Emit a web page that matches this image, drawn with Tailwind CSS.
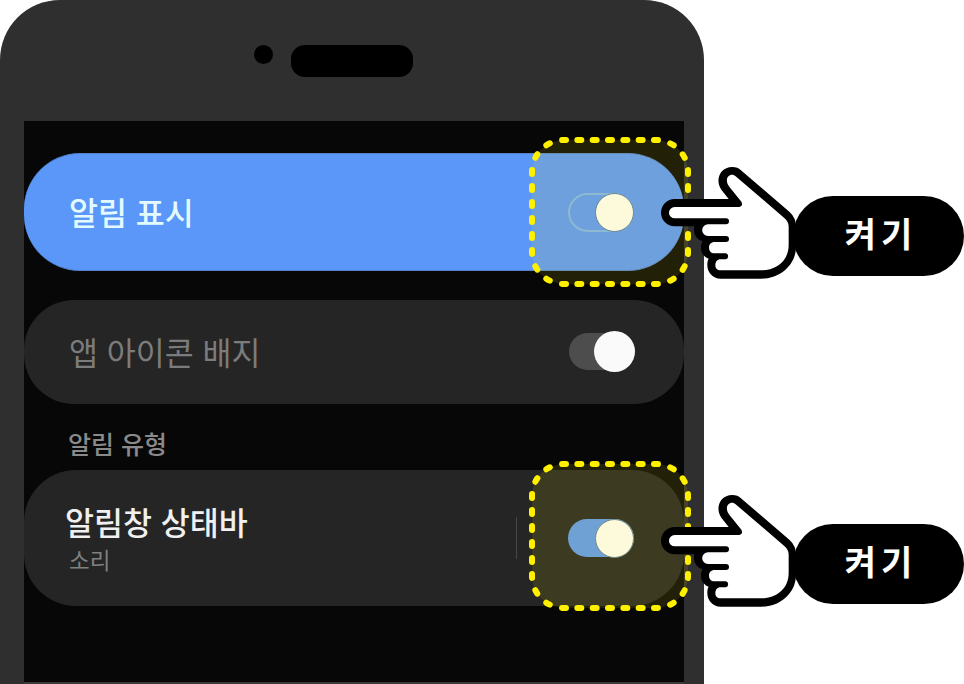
<!DOCTYPE html>
<html lang="ko">
<head>
<meta charset="utf-8">
<title>알림 설정</title>
<script src="https://cdn.jsdelivr.net/npm/@tailwindcss/browser@4"></script>
</head>
<body class="bg-white font-['Noto_Sans_CJK_KR','Noto_Sans',sans-serif]">
<svg class="hidden">
  <symbol id="hand" viewBox="30 30 414 348">
    <path fill="#000" d="M74 132H236L214 104C195 78 208 36 247 36C258 36 266 40 272 45L418 170Q438 188 438 215V275C438 330 390 371 335 371H212C188 371 172 352 172 330C172 322 173 316 176 311C160 305 153 292 153 278C153 270 155 264 158 259C142 254 132 240 132 225C132 221 132 217 133 214H74A41 41 0 0 1 74 132Z"/>
    <path fill="#fff" d="M74 156H266C276 156 279 147 273 139L239 97C225 80 229 59 247 59C250 59 253 61 256 63L402 188C412 197 416 203 416 215V270C416 318 378 346 335 346H212C202 346 196 340 196 330C196 320 202 313 212 313H228A9.500 9.500 0 0 0 228 295H194C183 295 177 287 177 278C177 268 183 261 194 261H228A9 9 0 0 0 228 243H174A17.500 17.500 0 0 1 174 208H228A9 9 0 0 0 228 190H74A17 17 0 0 1 74 156Z"/>
  </symbol>
  <symbol id="ring" viewBox="0 0 162 150">
    <rect x="3" y="3" width="156" height="144" rx="32" fill="#fff000" fill-opacity=".11"/>
    <g fill="none" stroke="#fff000" stroke-width="6" stroke-linecap="round" stroke-dashoffset="2">
      <path stroke-dasharray="4 11.333" d="M35 3H127M35 147H127"/>
      <path stroke-dasharray="4 12" d="M3 35V115M159 35V115"/>
      <path stroke-dasharray="4 12.755" d="M3 35A32 32 0 0 1 35 3M127 3A32 32 0 0 1 159 35M159 115A32 32 0 0 1 127 147M35 147A32 32 0 0 1 3 115"/>
    </g>
  </symbol>
</svg>
<div class="relative flex h-[684px] w-[964px] overflow-hidden">
  <section class="flex h-full w-[704px] shrink-0 flex-col rounded-t-[60px] bg-[#2f2f2f] pr-5 pl-6">
    <header class="flex h-[121px] shrink-0 items-start pt-[45px] pl-[230px]">
      <span class="size-[19px] rounded-full bg-black"></span>
      <span class="ml-[17.5px] h-8 w-[122.5px] rounded-[14px] bg-black"></span>
    </header>
    <main class="h-[563px] border-b-2 border-[#3a3a3a] bg-[#070707] pt-8">
      <div class="flex h-[118px] items-center justify-between rounded-[56px] border-y border-[#5380c9] bg-[#5b97f8] pr-[50px] pl-[45px]">
        <span class="-mt-[3px] text-[31.5px] leading-[40px] font-medium text-[#e3fbff]">알림 표시</span>
        <span class="flex h-[39px] w-[66px] items-center justify-end rounded-full border-2 border-[#7fb4ea]">
          <span class="-mr-0.5 size-[39px] shrink-0 rounded-full border border-[#5279a8] bg-[#fdfcf8]"></span>
        </span>
      </div>
      <div class="mt-[29px] flex h-[104px] items-center justify-between rounded-[50px] bg-[#252525] pr-[49px] pl-[45px]">
        <span class="-mt-[3px] text-[31.5px] leading-[40px] text-[#7c7c7c]">앱 아이콘 배지</span>
        <span class="-mt-px flex h-[37px] w-[66px] items-center justify-end rounded-full bg-[#4d4d4d]">
          <span class="size-[41px] shrink-0 rounded-full bg-[#fafafa]"></span>
        </span>
      </div>
      <h2 class="flex h-[66px] items-center pt-[11px] pl-[44px] text-[25px] leading-[32px] font-medium text-[#8a8a8a]">알림 유형</h2>
      <div class="flex h-[136px] items-center rounded-[52px] bg-[#252525] pr-[50px] pl-[41px]">
        <div class="flex flex-col">
          <span class="text-[31.5px] leading-[40px] font-medium text-[#f0f0f0]">알림창 상태바</span>
          <span class="pt-px pl-1 text-[22.5px] leading-[34px] text-[#808080]">소리</span>
        </div>
        <span class="ml-auto h-[42px] w-px bg-[#474747]"></span>
        <span class="ml-[51px] flex h-[38px] w-[66px] items-center justify-end rounded-full bg-[#5f98f0]">
          <span class="size-[39px] shrink-0 rounded-full border border-[#5f7c98] bg-[#fdfcf8]"></span>
        </span>
      </div>
    </main>
  </section>
  <aside class="ml-[89px] flex w-[171px] shrink-0 flex-col gap-[248px] pt-[196px]">
    <span class="flex h-20 items-center justify-center rounded-full bg-black pb-[6px] pl-[5px] text-[34px] leading-[40px] font-bold tracking-[5px] text-white">켜기</span>
    <span class="flex h-20 items-center justify-center rounded-full bg-black pb-[6px] pl-[5px] text-[34px] leading-[40px] font-bold tracking-[5px] text-white">켜기</span>
  </aside>
  <svg class="absolute top-[137px] left-[529px] h-[150px] w-[162px]"><use href="#ring"/></svg>
  <svg class="absolute top-[461px] left-[529px] h-[150px] w-[162px]"><use href="#ring"/></svg>
  <svg class="absolute top-[165px] left-[660px] h-[116px] w-[138px]"><use href="#hand"/></svg>
  <svg class="absolute top-[493px] left-[660px] h-[116px] w-[138px]"><use href="#hand"/></svg>
</div>
</body>
</html>
